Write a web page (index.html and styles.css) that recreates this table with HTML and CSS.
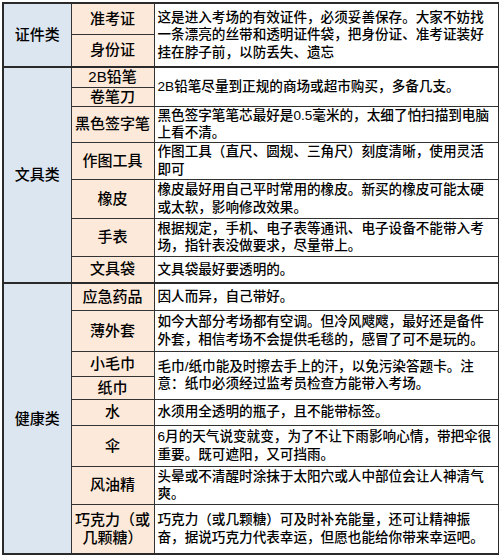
FILE: index.html
```html
<!DOCTYPE html>
<html lang="zh-CN">
<head>
<meta charset="utf-8">
<title>考试必备物品</title>
<link rel="stylesheet" href="styles.css">
</head>
<body>
<table class="list">
  <colgroup>
    <col class="c-cat">
    <col class="c-item">
    <col class="c-desc">
  </colgroup>
  <tbody class="sec">
    <tr class="h31">
      <td class="cat" rowspan="2">证件类</td>
      <td class="item">准考证</td>
      <td class="desc" rowspan="2">这是进入考场的有效证件，必须妥善保存。大家不妨找<br>一条漂亮的丝带和透明证件袋，把身份证、准考证装好<br>挂在脖子前，以防丢失、遗忘</td>
    </tr>
    <tr class="h33">
      <td class="item">身份证</td>
    </tr>
  </tbody>
  <tbody class="sec">
    <tr class="h20">
      <td class="cat" rowspan="8">文具类</td>
      <td class="item">2B铅笔</td>
      <td class="desc" rowspan="2">2B铅笔尽量到正规的商场或超市购买，多备几支。</td>
    </tr>
    <tr class="h19">
      <td class="item">卷笔刀</td>
    </tr>
    <tr class="h36">
      <td class="item">黑色签字笔</td>
      <td class="desc">黑色签字笔笔芯最好是0.5毫米的，太细了怕扫描到电脑<br>上看不清。</td>
    </tr>
    <tr class="h37">
      <td class="item">作图工具</td>
      <td class="desc">作图工具（直尺、圆规、三角尺）刻度清晰，使用灵活<br>即可</td>
    </tr>
    <tr class="h39">
      <td class="item">橡皮</td>
      <td class="desc">橡皮最好用自己平时常用的橡皮。新买的橡皮可能太硬<br>或太软，影响修改效果。</td>
    </tr>
    <tr class="h38">
      <td class="item">手表</td>
      <td class="desc">根据规定，手机、电子表等通讯、电子设备不能带入考<br>场，指针表没做要求，尽量带上。</td>
    </tr>
    <tr class="h27">
      <td class="item">文具袋</td>
      <td class="desc">文具袋最好要透明的。</td>
    </tr>
  </tbody>
  <tbody class="sec">
    <tr class="h27">
      <td class="cat" rowspan="9">健康类</td>
      <td class="item">应急药品</td>
      <td class="desc">因人而异，自己带好。</td>
    </tr>
    <tr class="h41">
      <td class="item">薄外套</td>
      <td class="desc">如今大部分考场都有空调。但冷风飕飕，最好还是备件<br>外套，相信考场不会提供毛毯的，感冒了可不是玩的。</td>
    </tr>
    <tr class="h25">
      <td class="item">小毛巾</td>
      <td class="desc" rowspan="2">毛巾/纸巾能及时擦去手上的汗，以免污染答题卡。注<br>意：纸巾必须经过监考员检查方能带入考场。</td>
    </tr>
    <tr class="h23">
      <td class="item">纸巾</td>
    </tr>
    <tr class="h26">
      <td class="item">水</td>
      <td class="desc">水须用全透明的瓶子，且不能带标签。</td>
    </tr>
    <tr class="h41">
      <td class="item">伞</td>
      <td class="desc">6月的天气说变就变，为了不让下雨影响心情，带把伞很<br>重要。既可遮阳，又可挡雨。</td>
    </tr>
    <tr class="h38">
      <td class="item">风油精</td>
      <td class="desc">头晕或不清醒时涂抹于太阳穴或人中部位会让人神清气<br>爽。</td>
    </tr>
    <tr class="h50">
      <td class="item">巧克力（或<br>几颗糖）</td>
      <td class="desc">巧克力（或几颗糖）可及时补充能量，还可让精神振<br>奋，据说巧克力代表幸运，但愿也能给你带来幸运吧。</td>
    </tr>
  </tbody>
</table>
</body>
</html>
```

FILE: styles.css
```css
html, body {
  margin: 0;
  padding: 0;
  background: #ffffff;
}

.list {
  margin: 2px 0 0 2px;
  width: 496px;
  table-layout: fixed;
  border-collapse: collapse;
  border: 2px solid #2a2a2a;
  font-family: "Liberation Sans", "Noto Sans CJK SC", sans-serif;
  font-weight: 500;
  color: #000000;
}

.c-cat { width: 68px; }
.c-item { width: 83px; }
.c-desc { width: 345px; }

.sec {
  border-top: 2px solid #2a2a2a;
}

.list td {
  border: 1px solid #333333;
  padding: 0;
  vertical-align: middle;
  white-space: nowrap;
  overflow: hidden;
}

.cat {
  background: #dce6f1;
  text-align: center;
  font-size: 15px;
  line-height: 18px;
}

.item {
  background: #fde9d9;
  text-align: center;
  font-size: 15px;
  line-height: 18px;
}

.desc {
  background: #ffffff;
  text-align: left;
  font-size: 13.6px;
  line-height: 17.5px;
  padding-left: 3px !important;
}

.h19 { height: 19px; }
.h20 { height: 20px; }
.h23 { height: 23px; }
.h25 { height: 25px; }
.h26 { height: 26px; }
.h27 { height: 27px; }
.h31 { height: 31px; }
.h33 { height: 33px; }
.h36 { height: 36px; }
.h37 { height: 37px; }
.h38 { height: 38px; }
.h39 { height: 39px; }
.h41 { height: 41px; }
.h50 { height: 50px; }
```
